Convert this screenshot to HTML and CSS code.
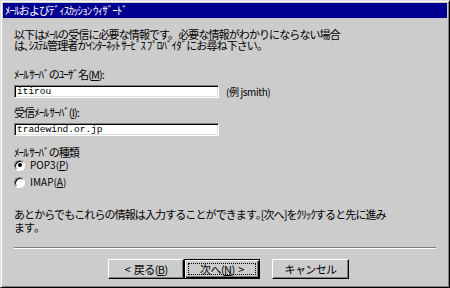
FILE: index.html
```html
<!DOCTYPE html>
<html lang="ja">
<head>
    <meta charset="UTF-8">
    <title>ﾒｰﾙおよびﾃﾞｨｽｶｯｼｮﾝ ｳｨｻﾞｰﾄﾞ</title>
    <link rel="stylesheet" href="styles.css">
</head>
<body>
    <div class="window">
        <div class="titlebar">ﾒｰﾙおよびﾃﾞｨｽｶｯｼｮﾝ ｳｨｻﾞｰﾄﾞ</div>
        <div class="content">
            <p class="intro">以下はﾒｰﾙの受信に必要な情報です。必要な情報がわかりにならない場合<br>は､ｼｽﾃﾑ管理者かｲﾝﾀｰﾈｯﾄ ｻｰﾋﾞｽ ﾌﾟﾛﾊﾞｲﾀﾞにお尋ね下さい。</p>

            <div class="field">
                <label for="user">ﾒｰﾙ ｻｰﾊﾞのﾕｰｻﾞ名(<u>M</u>):</label>
                <div class="row">
                    <input type="text" id="user" value="itirou">
                    <span class="hint">(例 jsmith)</span>
                </div>
            </div>

            <div class="field">
                <label for="server">受信ﾒｰﾙ ｻｰﾊﾞ(<u>I</u>):</label>
                <div class="row">
                    <input type="text" id="server" value="tradewind.or.jp">
                </div>
            </div>

            <div class="field kind">
                <span>ﾒｰﾙ ｻｰﾊﾞの種類</span>
                <div class="radio"><span class="dot checked"></span><span>POP3(<u>P</u>)</span></div>
                <div class="radio"><span class="dot"></span><span>IMAP(<u>A</u>)</span></div>
            </div>

            <p class="note">あとからでもこれらの情報は入力することができます｡[次へ]をｸﾘｯｸすると先に進み<br>ます｡</p>

            <div class="divider"></div>

            <div class="buttons">
                <button>&lt; 戻る(<u>B</u>)</button>
                <button class="default"><span class="focus">次へ(<u>N</u>) &gt;</span></button>
                <button class="cancel">キャンセル</button>
            </div>
        </div>
    </div>
</body>
</html>
```

FILE: styles.css
```css
*{
    box-sizing: border-box;
    margin: 0px;
    padding: 0px;
}

html{
    font-family: "Noto Sans CJK JP", "Noto Sans", sans-serif;
    font-size: 11px;
}

body{
    width: 450px;
    height: 288px;
    overflow: hidden;
    background-color: #cccccc;
}

.window{
    display: flex;
    flex-direction: column;
    width: 450px;
    height: 288px;
    padding: 2px;
    background-color: #cccccc;
    border: solid 1px;
    border-color: #dfdfdf #000000 #000000 #dfdfdf;
    box-shadow: inset 1px 1px #ffffff, inset -1px -1px #808080;
}

.titlebar{
    height: 15px;
    line-height: 15px;
    padding-left: 2px;
    color: #ffffff;
    background-color: #000090;
    letter-spacing: -0.9px;
}

.content{
    padding: 11px 11px 0px 11px;
    color: #000000;
    letter-spacing: -0.9px;
}

.intro{
    line-height: 11px;
}

.field{
    display: flex;
    flex-direction: column;
    margin-top: 17px;
    label, span{
        line-height: 12px;
    }
}

.field + .field{
    margin-top: 8px;
}

.field + .kind{
    margin-top: 10px;
}

.row{
    display: flex;
    align-items: center;
    gap: 7px;
    margin-top: 5px;
}

input{
    width: 205px;
    height: 13px;
    padding: 0px 2px;
    font-family: "Liberation Mono", monospace;
    font-size: 9.5px;
    letter-spacing: 0px;
    background-color: #ffffff;
    border: solid 1px;
    border-color: #808080 #ffffff #ffffff #808080;
    box-shadow: inset 1px 1px #000000, inset -1px -1px #dfdfdf;
    outline: none;
}

.hint{
    font-size: 10px;
    letter-spacing: -0.4px;
}

.radio{
    display: flex;
    align-items: center;
    gap: 5px;
    height: 12px;
    margin-top: 1px;
    font-size: 10px;
    letter-spacing: 0px;
}

.radio + .radio{
    margin-top: 5px;
}

.dot{
    display: flex;
    align-items: center;
    justify-content: center;
    width: 11px;
    height: 11px;
    border-radius: 50%;
    background-color: #ffffff;
    border: solid 1px;
    border-color: #808080 #ffffff #ffffff #808080;
    box-shadow: inset 1px 1px #000000;
}

.dot.checked::after{
    content: "";
    width: 4px;
    height: 4px;
    border-radius: 50%;
    background-color: #000000;
}

.note{
    margin-top: 20px;
    line-height: 13px;
}

.divider{
    margin-top: 13px;
    border-top: solid 1px #808080;
    border-bottom: solid 1px #ffffff;
}

.buttons{
    display: flex;
    margin-top: 10px;
    margin-left: 94px;
}

button{
    width: 76px;
    height: 20px;
    font-family: "Noto Sans CJK JP", sans-serif;
    font-size: 11px;
    letter-spacing: -0.6px;
    word-spacing: 2px;
    color: #000000;
    background-color: #cccccc;
    border: solid 1px;
    border-color: #ffffff #000000 #000000 #ffffff;
    box-shadow: inset -1px -1px #808080;
}

button.default{
    border: solid 1px #000000;
    box-shadow: inset 1px 1px #ffffff, inset -1px -1px #000000, inset -2px -2px #808080;
    padding: 3px;
}

.focus{
    display: flex;
    align-items: center;
    justify-content: center;
    height: 100%;
    border: dotted 1px #000000;
}

button.cancel{
    margin-left: 12px;
    width: 77px;
}
```
